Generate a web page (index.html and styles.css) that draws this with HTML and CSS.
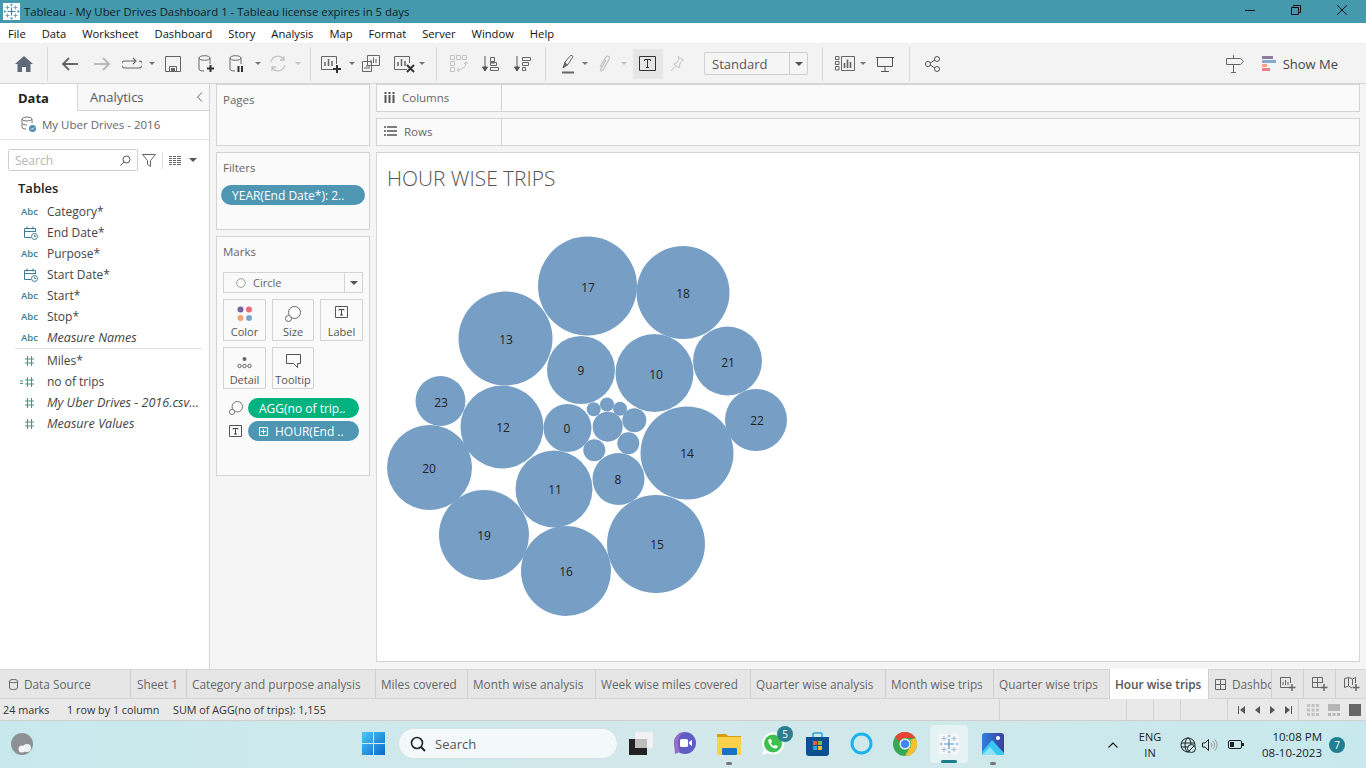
FILE: index.html
```html
<!DOCTYPE html>
<html lang="en">
<head>
<meta charset="utf-8">
<title>Tableau - My Uber Drives Dashboard 1</title>
<link rel="stylesheet" href="styles.css">
</head>
<body>
<div class="app">
  <header class="titlebar">
    <svg class="app-icon" width="17" height="17" viewBox="0 0 17 17"><rect width="17" height="17" fill="#fff"/><path d="M8.500 4.500v8M4.500 8.500h8" stroke="#3f86b5" stroke-width="1.200"/><path d="M4.500 2.500v4M2.500 4.500h4M12.500 2.500v4M10.500 4.500h4M4.500 10.500v4M2.500 12.500h4M12.500 10.500v4M10.500 12.500h4M8.500 .5v2.500M7 1.700h3M8.500 14v2.500M7 15.300h3M.5 8.500h2.500M1.700 7v3M14 8.500h2.500M15.300 7v3" stroke="#6ea6cb"/></svg>
    <span class="title-text">Tableau - My Uber Drives Dashboard 1 - Tableau license expires in 5 days</span>
    <div class="win-controls">
      <svg width="12" height="12" viewBox="0 0 12 12"><path d="M1 6.500h10" stroke="#111" stroke-width="1"/></svg>
      <svg width="12" height="12" viewBox="0 0 12 12"><path d="M1.500 3.500h7v7h-7zM3.500 3.500v-2h7v7h-2" fill="none" stroke="#111"/></svg>
      <svg width="12" height="12" viewBox="0 0 12 12"><path d="M1 1l10 10M11 1L1 11" stroke="#111"/></svg>
    </div>
  </header>
  <nav class="menubar">
    <span>File</span><span>Data</span><span>Worksheet</span><span>Dashboard</span><span>Story</span><span>Analysis</span><span>Map</span><span>Format</span><span>Server</span><span>Window</span><span>Help</span>
  </nav>
  <div class="toolbar">
    <span class="tb w47"><svg width="18" height="16" viewBox="0 0 18 16"><path d="M9 0L0 8h2.500v8h4.500v-5h4v5h4.500V8H18z" fill="#5f6b78"/></svg></span>
    <span class="sep"></span>
    <span class="tb w32 ml6"><svg width="18" height="16" viewBox="0 0 18 16"><path d="M17 8H2M8 2L2 8l6 6" fill="none" stroke="#666" stroke-width="1.800"/></svg></span>
    <span class="tb w32"><svg width="18" height="16" viewBox="0 0 18 16"><path d="M1 8h15M10 2l6 6-6 6" fill="none" stroke="#b9b9b9" stroke-width="1.800"/></svg></span>
    <span class="tb w26 ml1"><svg width="20" height="14" viewBox="0 0 20 14"><path d="M13 4H3a2.500 2.500 0 0 0 0 7h14a2.500 2.500 0 0 0 0-7M11 1l3 3-3 3" fill="none" stroke="#666" stroke-width="1.100"/></svg></span>
    <span class="caret-box w14"><i class="caret"></i></span>
    <span class="tb w28"><svg width="16" height="16" viewBox="0 0 16 16"><path d="M.5.500h15v15H.500zM4.500 15.500v-5h7v5" fill="none" stroke="#666"/><rect x="6" y="12" width="4" height="3.500" fill="#666"/></svg></span>
    <span class="tb w32 ml3"><svg width="17" height="18" viewBox="0 0 17 18"><ellipse cx="6.500" cy="3" rx="5.500" ry="2.300" fill="none" stroke="#666"/><path d="M1 3v11c0 1 1.500 2 5 2M12 3v6" fill="none" stroke="#666"/><path d="M12.500 10v7M9 13.500h7" stroke="#333" stroke-width="2"/></svg></span>
    <span class="tb w30"><svg width="17" height="18" viewBox="0 0 17 18"><ellipse cx="6.500" cy="3" rx="5.500" ry="2.300" fill="none" stroke="#666"/><path d="M1 3v11c0 1 1.500 2 5 2M12 3v6" fill="none" stroke="#666"/><path d="M9.500 11v6M13 11v6" stroke="#333" stroke-width="2"/></svg></span>
    <span class="caret-box w11"><i class="caret"></i></span>
    <span class="tb w29"><svg width="18" height="17" viewBox="0 0 18 17"><path d="M2 7a7 7 0 0 1 12.500-3M16 10a7 7 0 0 1-12.500 3M15 1v4h-4M3 16v-4h4" fill="none" stroke="#c4c4c4" stroke-width="1.300"/></svg></span>
    <span class="caret-box w11"><i class="caret light"></i></span>
    <span class="sep ml7"></span>
    <span class="tb w29 ml6"><svg width="22" height="18" viewBox="0 0 22 18"><path d="M14 14.500H.500v-13h15V9" fill="none" stroke="#666"/><path d="M4 11V7M7.500 11V4M11 11V6" stroke="#666" stroke-width="1.500"/><path d="M16 10v8M12 14h8" stroke="#333" stroke-width="2"/></svg></span>
    <span class="caret-box w11"><i class="caret"></i></span>
    <span class="tb w28"><svg width="18" height="17" viewBox="0 0 18 17"><path d="M5.500.500h12v10h-12zM.500 6.500h9v10h-9z" fill="#f3f3f3" stroke="#666"/><path d="M9 8V5M11.500 8V2.500M14 8V4M3 14v-2M5 14v-4M7 14v-3" stroke="#666"/></svg></span>
    <span class="tb w24 ml8"><svg width="22" height="18" viewBox="0 0 22 18"><path d="M13 14.500H.500v-13h15V8" fill="none" stroke="#666"/><path d="M4 11V7M7.500 11V4M11 11V6" stroke="#666" stroke-width="1.500"/><path d="M13 10l7 7M20 10l-7 7" stroke="#333" stroke-width="2"/></svg></span>
    <span class="caret-box w10"><i class="caret"></i></span>
    <span class="sep ml9"></span>
    <span class="tb w32 ml6"><svg width="19" height="18" viewBox="0 0 19 18"><g fill="none" stroke="#c4c4c4"><path d="M.500.500h4v4h-4zM6.500.500h4v4h-4zM12.500.500h4v4h-4zM.500 6.500h4v4h-4zM.500 12.500h4v4h-4zM7 15c5 0 9-3 9-8M14 9l2-2 2 2M9 13l-2 2 2 2"/></g></svg></span>
    <span class="tb w32"><svg width="18" height="16" viewBox="0 0 18 16"><path d="M3 0v14M.500 11L3 15l2.500-4z" stroke="#555" fill="#555"/><path d="M8.500 1.500h4v4h-4zM8.500 7h4M8.500 11.500h8v3h-8zM8.500 6.500h6v3h-6z" fill="none" stroke="#666"/></svg></span>
    <span class="tb w32"><svg width="18" height="16" viewBox="0 0 18 16"><path d="M3 0v14M.500 11L3 15l2.500-4z" stroke="#555" fill="#555"/><path d="M8.500 1.500h8v3h-8zM8.500 6.500h6v3h-6zM8.500 11.500h3v3h-3z" fill="none" stroke="#666"/></svg></span>
    <span class="sep ml6"></span>
    <span class="tb w28 ml8"><svg width="14" height="20" viewBox="0 0 14 20"><path d="M2 14L4 8l6-7 2 1.500-5 8z" fill="none" stroke="#666"/><path d="M2 14l5-3-3-3z" fill="#666"/><path d="M1 18.500h12" stroke="#666" stroke-width="2"/></svg></span>
    <span class="caret-box w5"><i class="caret"></i></span>
    <span class="tb w32 ml1"><svg width="13" height="20" viewBox="0 0 13 20"><path d="M2 13l6-10c2-2 4.500 0 3 2.500L5 16c-1 1.500-3 .500-2.200-1L8 6" fill="none" stroke="#c4c4c4" stroke-width="1.300"/></svg></span>
    <span class="caret-box w8"><i class="caret light"></i></span>
    <span class="tb w30 on ml5"><svg width="18" height="15" viewBox="0 0 18 15"><path d="M.500.500h16v14H.500z" fill="none" stroke="#333"/><path d="M5.500 5V3.500h6V5M8.500 3.500v8M7 11.500h3" fill="none" stroke="#333"/></svg></span>
    <span class="tb w28"><svg width="14" height="16" viewBox="0 0 14 16"><path d="M8 .500l5.500 3.500-2 1-2 4-.5 3L4 8l3-1.500 2-3.500zM5.500 10L1 15" fill="none" stroke="#c4c4c4"/></svg></span>
    <div class="fit-select"><span class="fit-text">Standard</span><span class="fit-arrow"><i class="caret dark"></i></span></div>
    <span class="sep ml14"></span>
    <span class="tb w28 ml8"><svg width="20" height="15" viewBox="0 0 20 15"><path d="M.500.500h3.500v3H.500zM.500 5.500h3.500v3H.500zM.500 10.500h3.500v3.500H.500zM6.500.500h13v14h-13z" fill="none" stroke="#666"/><path d="M9.500 12V7M12.500 12V3.500M15.500 12V6" stroke="#666" stroke-width="1.700"/></svg></span>
    <span class="caret-box w8"><i class="caret"></i></span>
    <span class="tb w32 ml2"><svg width="18" height="16" viewBox="0 0 18 16"><path d="M0 1.500h18M1.500 1.500v9h15v-9M9 10.500v5M5 15.500h8" fill="none" stroke="#555"/></svg></span>
    <span class="sep ml8"></span>
    <span class="tb w44"><svg width="15" height="16" viewBox="0 0 15 16"><circle cx="3" cy="8" r="2.500" fill="none" stroke="#555"/><circle cx="12" cy="3" r="2.500" fill="none" stroke="#555"/><circle cx="12" cy="13" r="2.500" fill="none" stroke="#555"/><path d="M5 7l5-3M5 9l5 3" stroke="#555"/></svg></span>
    <div class="toolbar-right">
      <svg width="18" height="18" viewBox="0 0 18 18"><path d="M.500 3.500h14l3 3-3 3H.500zM7.500 0v3.500M7.500 9.500V17M5 17.500h5" fill="none" stroke="#666"/></svg>
      <div class="showme">
        <svg width="14" height="16" viewBox="0 0 14 16"><rect width="11" height="3" fill="#8d7ba5"/><rect y="4" width="14" height="3" fill="#85a9d0"/><rect y="8" width="5" height="3" fill="#f2a57d"/><rect y="12" width="8" height="3" fill="#f27e8a"/></svg>
        <span>Show Me</span>
      </div>
    </div>
  </div>

  <main class="workspace">
    <aside class="data-pane">
      <div class="pane-tabs">
        <span class="pane-tab active">Data</span>
        <span class="pane-tab">Analytics<svg class="collapse" width="7" height="10" viewBox="0 0 7 10"><path d="M6 .500L1.500 5 6 9.500" fill="none" stroke="#666"/></svg></span>
      </div>
      <div class="source">
        <svg width="16" height="16" viewBox="0 0 16 16"><ellipse cx="7" cy="3" rx="5" ry="2" fill="none" stroke="#777"/><path d="M2 3v8c0 1 1 2 4 2M12 3v4M2 7c0 1 2 2 5 2" fill="none" stroke="#777"/><circle cx="12.500" cy="12.500" r="3.500" fill="#4f90b0"/><path d="M11 12.500l1 1 2-2" stroke="#fff" fill="none"/></svg>
        <span>My Uber Drives - 2016</span>
      </div>
      <div class="search-row">
        <div class="search"><span>Search</span><svg width="11" height="11" viewBox="0 0 11 11"><circle cx="6.500" cy="4.500" r="3.500" fill="none" stroke="#555"/><path d="M4 7L.5 10.500" stroke="#555"/></svg></div>
        <svg class="filter-ic" width="14" height="13" viewBox="0 0 14 13"><path d="M.5.500h13L8.500 6.500v6l-3-2v-4z" fill="none" stroke="#666"/></svg>
        <span class="vsep"></span>
        <svg class="list-ic" width="12" height="9" viewBox="0 0 12 9"><path d="M0 .5h12M0 2.500h12M0 4.500h12M0 6.500h12M0 8.500h12" stroke="#666"/><path d="M3.500 0v9M7.500 0v9" stroke="#fff"/></svg>
        <i class="caret dark list-caret"></i>
      </div>
      <h2 class="tables">Tables</h2>
      <ul class="fields">
        <li><b class="abc">Abc</b><span>Category*</span></li>
        <li><svg class="cal" width="14" height="14" viewBox="0 0 14 14"><path d="M7 11.500H.5v-9h11V6M.5 5.500h11M3 .500v3M9 .500v3" fill="none" stroke="#3e7c97"/><circle cx="10.500" cy="10.500" r="3" fill="#fff" stroke="#3e7c97"/><path d="M10.500 9v1.500h1.500" fill="none" stroke="#3e7c97"/></svg><span>End Date*</span></li>
        <li><b class="abc">Abc</b><span>Purpose*</span></li>
        <li><svg class="cal" width="14" height="14" viewBox="0 0 14 14"><path d="M7 11.500H.5v-9h11V6M.5 5.500h11M3 .500v3M9 .500v3" fill="none" stroke="#3e7c97"/><circle cx="10.500" cy="10.500" r="3" fill="#fff" stroke="#3e7c97"/><path d="M10.500 9v1.500h1.500" fill="none" stroke="#3e7c97"/></svg><span>Start Date*</span></li>
        <li><b class="abc">Abc</b><span>Start*</span></li>
        <li><b class="abc">Abc</b><span>Stop*</span></li>
        <li class="last-dim"><b class="abc">Abc</b><em>Measure Names</em></li>
        <li><svg class="num" width="9" height="10" viewBox="0 0 9 10"><path d="M2.500 0v10M6.500 0v10M0 3h9M0 7h9" stroke="#3f9a78"/></svg><span>Miles*</span></li>
        <li><svg class="num calc" width="14" height="10" viewBox="0 0 14 10"><path d="M0 4h3M0 6.500h3M7.500 0v10M11.500 0v10M5 3h9M5 7h9" stroke="#3f9a78"/></svg><span>no of trips</span></li>
        <li><svg class="num" width="9" height="10" viewBox="0 0 9 10"><path d="M2.500 0v10M6.500 0v10M0 3h9M0 7h9" stroke="#3f9a78"/></svg><em>My Uber Drives - 2016.csv...</em></li>
        <li><svg class="num" width="9" height="10" viewBox="0 0 9 10"><path d="M2.500 0v10M6.500 0v10M0 3h9M0 7h9" stroke="#3f9a78"/></svg><em>Measure Values</em></li>
      </ul>
    </aside>

    <section class="cards">
      <div class="card pages"><h3>Pages</h3></div>
      <div class="card filters"><h3>Filters</h3><div class="pill teal wide">YEAR(End Date*): 2..</div></div>
      <div class="card marks">
        <h3>Marks</h3>
        <div class="mark-select">
          <span class="mark-type"><svg width="10" height="10" viewBox="0 0 10 10"><circle cx="5" cy="5" r="4.300" fill="#fff" stroke="#999"/></svg>Circle</span>
          <span class="mark-arrow"><i class="caret dark"></i></span>
        </div>
        <div class="mark-grid">
          <div class="mark-btn"><svg width="16" height="16" viewBox="0 0 16 16"><circle cx="3.500" cy="3.500" r="3" fill="#7b5e9c"/><circle cx="12" cy="3.500" r="3" fill="#ef6a7a"/><circle cx="3.500" cy="12" r="3" fill="#f0a66e"/><circle cx="12" cy="12" r="3" fill="#7fa4cc"/></svg><span>Color</span></div>
          <div class="mark-btn"><svg width="16" height="16" viewBox="0 0 16 16"><circle cx="9.500" cy="6.500" r="6" fill="#fff" stroke="#666"/><circle cx="3.500" cy="12.500" r="3" fill="#fff" stroke="#666"/></svg><span>Size</span></div>
          <div class="mark-btn"><svg width="14" height="13" viewBox="0 0 14 13"><path d="M.5.500h12v11H.5z" fill="none" stroke="#555"/><path d="M4 4.500v-1h5v1M6.500 3.500v5.500M5 9h3" fill="none" stroke="#444"/></svg><span>Label</span></div>
          <div class="mark-btn"><svg width="15" height="16" viewBox="0 0 15 16"><circle cx="7.500" cy="5" r="2" fill="#666"/><g fill="none" stroke="#666"><circle cx="2.500" cy="12" r="1.700"/><circle cx="7.500" cy="12" r="1.700"/><circle cx="12.500" cy="12" r="1.700"/></g></svg><span>Detail</span></div>
          <div class="mark-btn"><svg width="15" height="15" viewBox="0 0 15 15"><path d="M.5.500h14v9h-3v4l-4-4H.5z" fill="none" stroke="#555"/></svg><span>Tooltip</span></div>
        </div>
        <div class="pill-row"><svg width="14" height="14" viewBox="0 0 16 16"><circle cx="9.500" cy="6.500" r="6" fill="none" stroke="#666"/><circle cx="3.500" cy="12.500" r="3" fill="#fafafa" stroke="#666"/></svg><div class="pill green">AGG(no of trip..</div></div>
        <div class="pill-row"><svg width="14" height="13" viewBox="0 0 14 13"><path d="M.5.500h12v11H.5z" fill="none" stroke="#555"/><path d="M4 4.500v-1h5v1M6.500 3.500v5.500M5 9h3" fill="none" stroke="#444"/></svg><div class="pill teal"><svg width="9" height="9" viewBox="0 0 9 9"><path d="M.5.500h8v8h-8zM4.500 2v5M2 4.500h5" fill="none" stroke="#fff"/></svg>HOUR(End ..</div></div>
      </div>
    </section>

    <section class="view">
      <div class="shelf"><div class="shelf-label"><svg width="11" height="11" viewBox="0 0 11 11"><path d="M1.500 3v8M5.500 3v8M9.500 3v8M1.500 0v2M5.500 0v2M9.500 0v2" stroke="#555" stroke-width="2"/></svg><span>Columns</span></div></div>
      <div class="shelf"><div class="shelf-label"><svg width="13" height="10" viewBox="0 0 13 10"><path d="M3 1h10M3 5h10M3 9h10M0 1h2M0 5h2M0 9h2" stroke="#555" stroke-width="1.500"/></svg><span>Rows</span></div></div>
      <div class="viz">
        <h1 class="viz-title">HOUR WISE TRIPS</h1>
        <svg class="bubbles" viewBox="377 200 982 461" width="982" height="461">
          <g class="b"><circle cx="587.500" cy="286" r="49.500"/><text x="588" y="292">17</text></g>
          <g class="b"><circle cx="683" cy="292.500" r="46.500"/><text x="683" y="298">18</text></g>
          <g class="b"><circle cx="505.500" cy="338.500" r="47"/><text x="506" y="344">13</text></g>
          <g class="b"><circle cx="581" cy="370" r="34"/><text x="581" y="375">9</text></g>
          <g class="b"><circle cx="654.500" cy="373" r="39"/><text x="656" y="379">10</text></g>
          <g class="b"><circle cx="727.500" cy="361" r="34.500"/><text x="728" y="367">21</text></g>
          <g class="b"><circle cx="440.500" cy="401" r="25"/><text x="441" y="407">23</text></g>
          <g class="b"><circle cx="756" cy="420" r="31"/><text x="757" y="425">22</text></g>
          <g class="b"><circle cx="502" cy="427" r="41.500"/><text x="503" y="432">12</text></g>
          <g class="b"><circle cx="567.500" cy="428" r="24"/><text x="567" y="433">0</text></g>
          <g class="b"><circle cx="687" cy="453" r="46.500"/><text x="687" y="458">14</text></g>
          <g class="b"><circle cx="429.500" cy="467.500" r="42.500"/><text x="429" y="473">20</text></g>
          <g class="b"><circle cx="554" cy="489" r="38.500"/><text x="555" y="494">11</text></g>
          <g class="b"><circle cx="618.500" cy="479" r="26"/><text x="618" y="484">8</text></g>
          <g class="b"><circle cx="484" cy="535" r="45"/><text x="484" y="540">19</text></g>
          <g class="b"><circle cx="656" cy="544" r="49"/><text x="657" y="549">15</text></g>
          <g class="b"><circle cx="566" cy="571" r="45"/><text x="566" y="576">16</text></g>
          <g class="b"><circle cx="593.700" cy="409.300" r="7"/><circle cx="607" cy="404.500" r="7"/><circle cx="620" cy="408.700" r="7"/><circle cx="607.700" cy="426.700" r="15"/><circle cx="634.300" cy="420.300" r="12"/><circle cx="628.300" cy="443.300" r="11"/><circle cx="594.300" cy="450.300" r="11"/></g>
        </svg>
      </div>
    </section>
  </main>

  <div class="tabs">
    <span class="tab t-ds"><svg width="9" height="11" viewBox="0 0 9 11"><path d="M.5 2v7c0 2 8 2 8 0V2c0-2-8-2-8 0zM.5 2.500c0 1.500 8 1.500 8 0" fill="none" stroke="#666"/></svg>Data Source</span>
    <span class="tab t1">Sheet 1</span>
    <span class="tab t2">Category and purpose analysis</span>
    <span class="tab t3">Miles covered</span>
    <span class="tab t4">Month wise analysis</span>
    <span class="tab t5">Week wise miles covered</span>
    <span class="tab t6">Quarter wise analysis</span>
    <span class="tab t7">Month wise trips</span>
    <span class="tab t8">Quarter wise trips</span>
    <span class="tab t9 active">Hour wise trips</span>
    <span class="tab t10"><svg width="11" height="11" viewBox="0 0 11 11"><path d="M.5.500h10v10H.5zM5.500.500v10M.5 5.500h10" fill="none" stroke="#666"/></svg>Dashboard 1</span>
    <span class="tab-new"><svg width="16" height="15" viewBox="0 0 16 15"><path d="M10 10.500H.5V.5h10V6" fill="none" stroke="#666"/><path d="M3 8V5M5.500 8V3M8 8V5" stroke="#666"/><path d="M12 7v7M8.500 10.500h7" stroke="#666" stroke-width="1.500"/></svg></span>
    <span class="tab-new"><svg width="16" height="15" viewBox="0 0 16 15"><path d="M9 10.500H.5V.5h10V6M5.500.5v10M.5 5.500h10" fill="none" stroke="#666"/><path d="M12 7v7M8.500 10.500h7" stroke="#666" stroke-width="1.500"/></svg></span>
    <span class="tab-new"><svg width="16" height="15" viewBox="0 0 16 15"><path d="M8 11L4.500 9 .5 10.500V1.500L4.500.5l4 1.500 3-1.500V6M4.500.5V9M8.500 2v6" fill="none" stroke="#666"/><path d="M12 7v7M8.500 10.500h7" stroke="#666" stroke-width="1.500"/></svg></span>
  </div>

  <footer class="statusbar">
    <span class="st s1">24 marks</span><span class="st s2">1 row by 1 column</span><span class="st s3">SUM of AGG(no of trips): 1,155</span>
    <span class="cell c1"></span><span class="cell c2"></span><span class="cell c2"></span><span class="cell c3"></span>
    <span class="cell pager">
      <svg width="7" height="8" viewBox="0 0 7 8"><path d="M.5 0v8" stroke="#555"/><path d="M7 0v8L2 4z" fill="#555"/></svg>
      <svg width="5" height="8" viewBox="0 0 5 8"><path d="M5 0v8L0 4z" fill="#555"/></svg>
      <svg width="5" height="8" viewBox="0 0 5 8"><path d="M0 0v8l5-4z" fill="#555"/></svg>
      <svg width="7" height="8" viewBox="0 0 7 8"><path d="M6.500 0v8" stroke="#555"/><path d="M0 0v8l5-4z" fill="#555"/></svg>
    </span>
    <span class="cell views">
      <svg width="12" height="12" viewBox="0 0 12 12"><path d="M0 0h3v3H0zM4.500 0h3v3h-3zM9 0h3v3H9zM0 4.500h3v3H0zM4.500 4.500h3v3h-3zM9 4.500h3v3H9zM0 9h3v3H0zM4.500 9h3v3h-3zM9 9h3v3H9z" fill="#c2c2c2"/></svg>
      <svg width="12" height="12" viewBox="0 0 12 12"><path d="M0 0h12v7H0zM0 9h3v3H0zM4.500 9h3v3h-3zM9 9h3v3H9z" fill="#b5b5b5"/></svg>
      <svg width="12" height="12" viewBox="0 0 12 12"><path d="M0 0h12v12H0z" fill="#666"/></svg>
    </span>
  </footer>

  <div class="taskbar">
    <div class="weather"><svg width="22" height="22" viewBox="0 0 22 22"><circle cx="11" cy="11" r="11" fill="#8d9196"/><circle cx="16" cy="15" r="4" fill="#eef1f3"/><circle cx="11" cy="16" r="3.500" fill="#f4f6f7"/></svg></div>
    <div class="task-center">
      <svg class="winlogo" width="23" height="23" viewBox="0 0 23 23"><defs><linearGradient id="wg" x1="0" y1="0" x2="1" y2="1"><stop offset="0" stop-color="#4fc6f7"/><stop offset="1" stop-color="#0669c8"/></linearGradient></defs><path d="M0 0h11v11H0zM12 0h11v11H12zM0 12h11v11H0zM12 12h11v11H12z" fill="url(#wg)"/></svg>
      <div class="searchbox"><svg width="16" height="16" viewBox="0 0 16 16"><circle cx="7" cy="7" r="5.500" fill="none" stroke="#222" stroke-width="1.600"/><path d="M11 11l4 4" stroke="#222" stroke-width="2"/></svg><span>Search</span></div>
      <div class="task-icons">
        <span class="ti ti-view"><svg width="24" height="23" viewBox="0 0 24 23"><rect x="0" y="7" width="18" height="16" fill="#222"/><rect x="6" y="0" width="18" height="16" fill="#f2f2f2"/><rect x="6" y="7" width="12" height="9" fill="#bdbdbd"/></svg></span>
        <span class="ti ti-meet"><svg width="24" height="23" viewBox="0 0 24 23"><circle cx="12" cy="11" r="11" fill="#5f5cc4"/><path d="M1 11a11 11 0 0 1 11-11c-6 2-9 9-5 20l-5 2z" fill="#9a6bc9"/><rect x="7" y="7" width="8" height="8" rx="1.500" fill="#fff"/><path d="M16 10l3-2v6l-3-2z" fill="#fff"/></svg></span>
        <span class="ti ti-files dot"><svg width="24" height="22" viewBox="0 0 24 22"><path d="M0 2a1 1 0 0 1 1-1h8l2 2h13v4H0z" fill="#d99b12"/><rect y="4" width="24" height="18" fill="#fbd04b"/><rect x="5" y="15" width="15" height="7" rx="1" fill="#1773c4"/></svg></span>
        <span class="ti ti-wa"><svg width="24" height="24" viewBox="0 0 24 24"><path d="M1 23l1.800-6A11 11 0 1 1 7 21z" fill="#fff"/><circle cx="12" cy="11.500" r="9" fill="#3cc14f"/><path d="M8 7c-1 1-1 3 1 6s5 4 7 3l1-2-3-1-1 1c-1 0-3-2-3-3l1-1-1-3z" fill="#fff"/></svg><b class="wa-badge">5</b></span>
        <span class="ti ti-store"><svg width="23" height="24" viewBox="0 0 23 24"><path d="M7 5V2a1 1 0 0 1 1-1h7a1 1 0 0 1 1 1v3" fill="none" stroke="#2ba4e0" stroke-width="1.600"/><path d="M0 5h23v16a3 3 0 0 1-3 3H3a3 3 0 0 1-3-3z" fill="#0c4f8f"/><rect x="7" y="9" width="4" height="4" fill="#ee5a3a"/><rect x="12" y="9" width="4" height="4" fill="#7ebb42"/><rect x="7" y="14" width="4" height="4" fill="#2da6e6"/><rect x="12" y="14" width="4" height="4" fill="#fcb72a"/></svg></span>
        <span class="ti ti-cortana"><svg width="23" height="23" viewBox="0 0 23 23"><circle cx="11.500" cy="11.500" r="9.500" fill="none" stroke="#1cb2ee" stroke-width="3"/></svg></span>
        <span class="ti ti-chrome"><svg width="24" height="24" viewBox="0 0 24 24"><circle cx="12" cy="12" r="12" fill="#34a853"/><path d="M12 0a12 12 0 0 1 10.400 6H12a6 6 0 0 0-5.600 3.800L2.200 4.800A12 12 0 0 1 12 0z" fill="#ea4335"/><path d="M22.400 6a12 12 0 0 1-10.400 18l5.200-9A6 6 0 0 0 17 8z" fill="#fbc02d"/><circle cx="12" cy="12" r="5.500" fill="#fff"/><circle cx="12" cy="12" r="4.300" fill="#4285f4"/></svg></span>
        <span class="ti ti-tab"><svg width="20" height="20" viewBox="0 0 20 20"><rect width="20" height="20" fill="#f7f7f7"/><path d="M10 5v10M5 10h10" stroke="#5b93c7" stroke-width="1.200"/><path d="M5 2v5M2.500 4.500h5M15 2v5M12.500 4.500h5M5 13v5M2.500 15.500h5M15 13v5M12.500 15.500h5M10 .5v3M8.500 2h3M10 16.500v3M8.500 18h3M.5 10h3M2 8.500v3M16.500 10h3M18 8.500v3" stroke="#9cbcd9"/></svg><i class="run-bar"></i></span>
        <span class="ti ti-photos dot"><svg width="22" height="22" viewBox="0 0 22 22"><defs><linearGradient id="pg" x1="0" y1="0" x2="1" y2="0"><stop offset="0" stop-color="#2f7fe0"/><stop offset="1" stop-color="#3c3f9c"/></linearGradient></defs><rect width="22" height="22" rx="3" fill="url(#pg)"/><circle cx="16" cy="5" r="2" fill="#fff"/><path d="M0 19L10 7l12 13v2H0z" fill="#39c8f0"/><path d="M0 22l8-8 7 8z" fill="#8fe3f7"/></svg></span>
      </div>
    </div>
    <div class="tray">
      <svg class="chev" width="10" height="6" viewBox="0 0 10 6"><path d="M.5 5.500L5 1l4.500 4.500" fill="none" stroke="#111" stroke-width="1.200"/></svg>
      <div class="lang"><span>ENG</span><span>IN</span></div>
      <svg class="tray-ic globe" width="16" height="16" viewBox="0 0 16 16"><g fill="none" stroke="#222"><circle cx="8" cy="8" r="7"/><ellipse cx="8" cy="8" rx="3" ry="7"/><path d="M1 6h14M1 10h14"/></g><circle cx="11.500" cy="11.500" r="4" fill="#cdeaee" stroke="#222"/><path d="M9 14l5-5" stroke="#222"/></svg>
      <svg class="tray-ic vol" width="16" height="12" viewBox="0 0 16 12"><path d="M.5 4h2.500L6.500.5v11L3 8H.5z" fill="none" stroke="#222"/><path d="M9 3.500a4 4 0 0 1 0 5M11 2a6.500 6.500 0 0 1 0 8M13 .5a9 9 0 0 1 0 11" fill="none" stroke="#999"/></svg>
      <svg class="tray-ic batt" width="16" height="9" viewBox="0 0 16 9"><rect x=".5" y=".5" width="13" height="8" rx="1.500" fill="none" stroke="#222"/><rect x="2" y="2" width="4" height="5" fill="#222"/><rect x="14" y="3" width="2" height="3" fill="#222"/></svg>
      <div class="clock"><span>10:08 PM</span><span>08-10-2023</span></div>
      <b class="notif">7</b>
    </div>
  </div>
</div>
</body>
</html>
```
FILE: styles.css
```css
* { box-sizing: border-box; }
html, body { margin: 0; padding: 0; }
body { width: 1366px; height: 768px; overflow: hidden; font-family: "Open Sans", "Liberation Sans", sans-serif; font-size: 12px; color: #333; }
ul, h1, h2, h3 { margin: 0; padding: 0; list-style: none; font-weight: 400; }
svg { display: block; flex: none; }
.app { display: flex; flex-direction: column; width: 1366px; height: 768px; }

.titlebar { height: 23px; background: #4599ad; display: flex; align-items: center; padding-left: 3px; position: relative; }
.app-icon { margin-right: 4px; }
.title-text { font-size: 11.350px; color: #10202a; }
.win-controls { margin-left: auto; display: flex; gap: 34px; padding-right: 18px; margin-top: -3px; }

.menubar { height: 20px; background: #fff; display: flex; align-items: center; padding-left: 8px; gap: 16px; font-size: 11.200px; color: #111; }

.toolbar { height: 41px; background: #f3f3f3; border-top: 1px solid #efefef; border-bottom: 1px solid #d4d4d4; display: flex; align-items: center; }
.tb { display: flex; align-items: center; justify-content: center; height: 30px; flex: none; }
.w24 { width: 24px; } .w26 { width: 26px; } .w28 { width: 28px; } .w29 { width: 29px; } .w30 { width: 30px; } .w32 { width: 32px; } .w44 { width: 44px; } .w47 { width: 47px; }
.w5 { width: 5px; } .w8 { width: 8px; } .w10 { width: 10px; } .w11 { width: 11px; } .w14 { width: 14px; }
.ml1 { margin-left: 1px; } .ml2 { margin-left: 2px; } .ml3 { margin-left: 3px; } .ml5 { margin-left: 5px; } .ml6 { margin-left: 6px; } .ml7 { margin-left: 7px; } .ml8 { margin-left: 8px; } .ml9 { margin-left: 9px; } .ml14 { margin-left: 14px; }
.sep { width: 1px; height: 34px; background: #d8d8d8; flex: none; }
.caret-box { display: flex; justify-content: center; align-items: center; height: 30px; flex: none; }
.caret { display: block; width: 0; height: 0; border-left: 3px solid transparent; border-right: 3px solid transparent; border-top: 3px solid #777; flex: none; }
.caret.light { border-top-color: #c4c4c4; }
.caret.dark { border-left-width: 4px; border-right-width: 4px; border-top: 4px solid #555; }
.on { background: #e6e6e6; }
.fit-select { width: 104px; height: 23px; margin-left: 13px; background: #f5f5f5; border: 1px solid #cfcfcf; border-radius: 2px; display: flex; align-items: center; font-size: 13px; color: #555; flex: none; }
.fit-text { flex: 1; padding-left: 7px; }
.fit-arrow { width: 18px; height: 100%; border-left: 1px solid #cfcfcf; display: flex; align-items: center; justify-content: center; }
.toolbar-right { margin-left: auto; display: flex; align-items: center; gap: 18px; padding-right: 28px; }
.showme { display: flex; align-items: center; gap: 7px; font-size: 13px; color: #444; }

.workspace { height: 585px; display: flex; background: #f5f5f5; }

.data-pane { width: 210px; background: #fff; border-right: 1px solid #d4d4d4; flex: none; }
.pane-tabs { display: flex; height: 27px; }
.pane-tab { height: 27px; display: flex; align-items: center; font-size: 13px; color: #555; background: #f8f8f8; border-bottom: 1px solid #d4d4d4; border-left: 1px solid #d4d4d4; width: 132px; padding-left: 12px; position: relative; }
.pane-tab.active { width: 77px; background: #fff; border: 0; font-weight: 700; color: #222; padding-left: 18px; }
.collapse { position: absolute; right: 6px; top: 8px; }
.source { height: 29px; display: flex; align-items: center; gap: 6px; padding: 0 0 2px 20px; border-bottom: 1px solid #e3e3e3; color: #666; font-size: 11.500px; }
.search-row { display: flex; align-items: center; height: 22px; margin-top: 9px; padding-left: 8px; }
.search { width: 130px; height: 22px; border: 1px solid #cfcfcf; border-radius: 2px; display: flex; align-items: center; justify-content: space-between; padding: 0 6px; color: #b5b5b5; font-size: 12px; }
.filter-ic { margin-left: 4px; }
.vsep { width: 1px; height: 17px; background: #ddd; margin-left: 6px; }
.list-ic { margin-left: 6px; }
.list-caret { margin-left: 8px; }
.tables { font-size: 13px; font-weight: 600; color: #222; padding-left: 18px; margin-top: 7px; line-height: 20px; }
.fields { margin-top: 3px; }
.fields li { height: 21px; display: flex; align-items: center; padding-left: 47px; position: relative; color: #444; font-size: 12px; white-space: nowrap; }
.fields li em { font-size: 12.600px; }
.fields li.last-dim { margin-bottom: 2px; }
.fields li.last-dim::after { content: ""; position: absolute; left: 15px; right: 7px; bottom: -1px; height: 1px; background: #e0e0e0; }
.abc { position: absolute; left: 21px; font-size: 9.500px; font-weight: 600; color: #3e7c97; }
.cal { position: absolute; left: 24px; top: 4px; }
.num { position: absolute; left: 25px; top: 6px; }
.num.calc { left: 20px; }

.cards { width: 166px; flex: none; display: flex; flex-direction: column; gap: 6px; padding-left: 6px; padding-right: 6px; }
.card { background: #fafafa; border: 1px solid #d4d4d4; padding: 0 6px; }
.card h3 { font-size: 11.500px; color: #666; line-height: 16px; }
.pages { height: 62px; } .pages h3 { padding-top: 6px; line-height: 18px; }
.filters { height: 78px; }
.filters h3 { padding-top: 7px; height: 32px; }
.marks { height: 240px; }
.marks h3 { padding-top: 7px; height: 35px; }
.pill { height: 20px; border-radius: 10px; color: #fff; font-size: 12px; display: flex; align-items: center; white-space: nowrap; }
.teal { background: #4e96b2; }
.green { background: #03b37f; }
.wide { margin: 0 -2px; width: 144px; padding-left: 11px; }
.mark-select { height: 21px; border: 1px solid #d4d4d4; display: flex; align-items: center; color: #666; font-size: 11px; background: #f9f9f9; }
.mark-type { flex: 1; display: flex; align-items: center; gap: 7px; padding-left: 12px; }
.mark-arrow { width: 18px; height: 100%; border-left: 1px solid #d4d4d4; display: flex; align-items: center; justify-content: center; }
.mark-grid { display: grid; grid-template-columns: 43px 42px 43px; column-gap: 6px; row-gap: 6px; margin-top: 6px; }
.mark-btn { height: 42px; border: 1px solid #d4d4d4; display: flex; flex-direction: column; align-items: center; justify-content: space-between; padding: 6px 0 1px; font-size: 11px; color: #555; }
.pill-row { display: flex; align-items: center; gap: 5px; margin-top: 3px; padding-left: 6px; height: 20px; }
.mark-grid + .pill-row { margin-top: 9px; }
.pill-row .pill { width: 111px; padding-left: 11px; gap: 7px; }
.pill-row svg { flex: none; }

.view { flex: 1; display: flex; flex-direction: column; gap: 6px; padding-right: 6px; }
.shelf { height: 28px; background: #fafafa; border: 1px solid #d4d4d4; flex: none; }
.shelf-label { width: 125px; height: 100%; border-right: 1px solid #d4d4d4; display: flex; align-items: center; gap: 7px; padding: 0 0 2px 7px; font-size: 11.500px; color: #666; }
.viz { height: 510px; background: #fff; border: 1px solid #d4d4d4; flex: none; }
.viz-title { font-size: 20.900px; font-weight: 300; color: #555; padding: 11px 0 0 10px; height: 47px; line-height: 28px; }
.bubbles circle { fill: #779fc5; }
.bubbles text { font-size: 12px; fill: #222; text-anchor: middle; font-family: "Open Sans", sans-serif; }

.tabs { height: 30px; background: #e6e6e6; border-top: 1px solid #d4d4d4; border-bottom: 1px solid #d4d4d4; display: flex; color: #666; font-size: 11.800px; }
.tab { height: 100%; display: flex; align-items: center; gap: 6px; white-space: nowrap; overflow: hidden; border-right: 1px solid #cfcfcf; padding-left: 5px; flex: none; }
.t-ds { width: 131px; padding-left: 9px; }
.t1 { width: 56px; padding-left: 6px; } .t2 { width: 189px; } .t3 { width: 92px; } .t4 { width: 128px; } .t5 { width: 155px; } .t6 { width: 135px; } .t7 { width: 108px; } .t8 { width: 116px; }
.t9 { width: 99px; background: #fff; font-weight: 600; color: #555; margin-top: -1px; height: 30px; }
.t10 { width: 62px; border-right: 0; padding-left: 6px; }
.tab-new { width: 32px; border-left: 1px solid #cfcfcf; display: flex; align-items: center; justify-content: center; flex: none; }

.statusbar { height: 22px; background: #e9e9e9; border-bottom: 1px solid #cfcfcf; display: flex; align-items: center; font-size: 10.800px; color: #333; }
.st { white-space: nowrap; }
.s1 { padding-left: 3px; width: 67px; } .s2 { width: 106px; } .s3 { width: 826px; }
.cell { height: 100%; border-left: 1px solid #d2d2d2; flex: none; }
.c1 { width: 127px; } .c2 { width: 27px; } .c3 { width: 47px; }
.pager { width: 71px; display: flex; align-items: center; gap: 10px; padding-left: 10px; }
.views { width: 67px; display: flex; align-items: center; gap: 9px; padding-left: 8px; }

.taskbar { height: 47px; background: linear-gradient(90deg, #c7e9ed 0%, #d3e8ea 50%, #c7e9ed 100%); display: flex; align-items: center; position: relative; padding-bottom: 2px; }
.weather { margin-left: 11px; width: 351px; flex: none; }
.task-center { display: flex; align-items: center; }
.winlogo { margin-right: 13px; }
.searchbox { width: 220px; height: 31px; background: #f3f9fa; border: 1px solid #d5e3e5; border-radius: 16px; display: flex; align-items: center; gap: 9px; padding-left: 11px; font-size: 13px; color: #555; }
.task-icons { display: flex; align-items: center; margin-left: 1px; }
.ti { width: 44px; height: 47px; display: flex; align-items: center; justify-content: center; position: relative; flex: none; }
.dot::after { content: ""; position: absolute; bottom: 2px; left: 50%; margin-left: -3px; width: 6px; height: 3px; border-radius: 2px; background: #777; }
.wa-badge { position: absolute; left: 26px; top: 6px; width: 16px; height: 16px; border-radius: 50%; background: #2b7f8f; color: #fff; font-size: 10px; font-weight: 400; display: flex; align-items: center; justify-content: center; }
.ti-tab { width: 38px; height: 38px; margin: 0 14px 0 3px; background: #e5f3f5; border-radius: 4px; }
.run-bar { position: absolute; bottom: 0; left: 11px; width: 16px; height: 3px; border-radius: 2px; background: #1b7f8c; }
.ti-photos { width: 22px; }
.tray { position: absolute; right: 0; top: 0; bottom: 0; width: 261px; display: flex; align-items: center; color: #222; }
.chev { margin-left: 3px; }
.lang { margin-left: 19px; width: 26px; display: flex; flex-direction: column; align-items: center; font-size: 11px; line-height: 16px; }
.globe { margin-left: 17px; }
.vol { margin-left: 6px; }
.batt { margin-left: 10px; }
.clock { margin-left: 12px; display: flex; flex-direction: column; align-items: flex-end; font-size: 11.500px; line-height: 16px; width: 66px; white-space: nowrap; flex: none; }
.notif { margin-left: 7px; width: 16px; height: 16px; border-radius: 50%; background: #1f7f90; color: #fff; font-size: 10px; font-weight: 400; display: flex; align-items: center; justify-content: center; }
```
